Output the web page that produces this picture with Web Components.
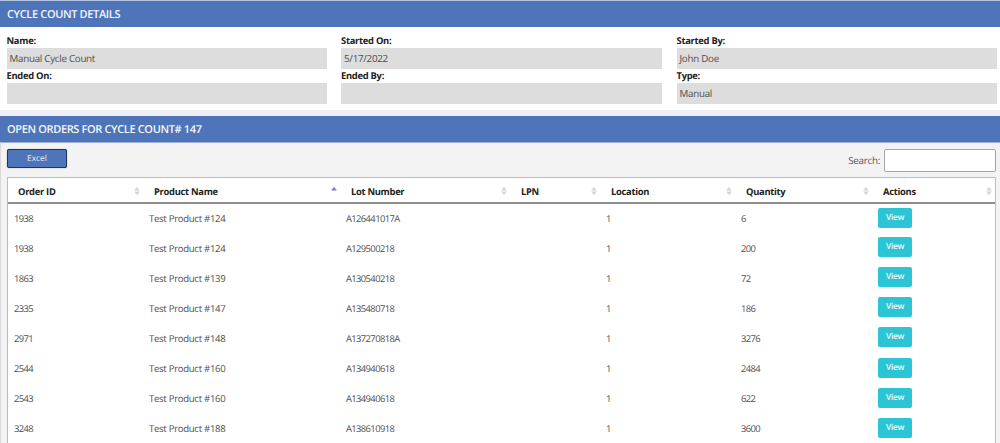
<!DOCTYPE html>
<html><head><meta charset="utf-8">
<style>
html,body{margin:0;padding:0;background:#eef0f5;height:443px;overflow:hidden;font-family:"Open Sans","Noto Sans",sans-serif;color:#333;text-rendering:geometricPrecision}
</style></head><body>
<count-page></count-page>
<template id="bar-t"><style>
:host{display:block;background:#4e74b9;color:#f4f7fc;height:26px;box-sizing:border-box;padding:0 7px;font:600 11px/27px "Open Sans",sans-serif;letter-spacing:-.36px}
</style><slot></slot></template>

<template id="field-t"><style>
:host{display:block;min-width:0}
.l{font:700 9.4px/14px "Open Sans",sans-serif;letter-spacing:-.28px;color:#222;height:14px}
.v{background:#dddddd;height:21px;font:400 9.8px/21px "Open Sans",sans-serif;letter-spacing:-.28px;color:#4f4f4f;padding:0 3px;box-sizing:border-box}
</style><div class="l"></div><div class="v"></div></template>

<template id="details-t"><style>
:host{display:grid;grid-template-columns:320px 321px 320px;column-gap:14.5px;row-gap:0;background:#fff;padding:7px 4px 6px 6.5px;height:83px;box-sizing:border-box;align-content:start}
</style><slot></slot></template>

<template id="btn-t"><style>
:host{display:inline-block;box-sizing:border-box;width:60px;height:19px;background:#4e74b9;border:1px solid #1f3559;border-radius:2px;color:#e8eefb;font:400 8.4px/18px "Open Sans",sans-serif;text-align:center;box-shadow:0 0 1px #555}
</style><slot></slot></template>

<template id="view-t"><style>
:host{display:block;box-sizing:border-box;width:34px;height:20px;background:#2cc5d6;border-radius:2px;color:#f2fbfc;font:600 8.4px/20px "Open Sans",sans-serif;text-align:center}
</style><slot></slot></template>

<template id="sort-t"><style>
:host{display:inline-block;width:6px;height:10px;line-height:0}
svg{display:block}
</style><svg width="6" height="10" viewBox="0 0 6 10"><path class="u" d="M3 .8 L5.8 4.4 L.2 4.4Z"/><path class="d" d="M.2 5.6 L5.8 5.6 L3 9.2Z"/></svg></template>

<template id="table-t"><style>
:host{display:block;background:#fff;border:1px solid #bdbdbd;border-bottom:0;box-sizing:border-box}
table{border-collapse:collapse;table-layout:fixed;width:100%;font-family:"Open Sans",sans-serif}
th{height:25px;padding:2px 0 0 11px;text-align:left;font:700 9.4px/21px "Open Sans",sans-serif;letter-spacing:-.3px;color:#222;border-bottom:2px solid #8f8f8f;box-sizing:border-box}
th:first-child{padding-left:10px}
th .in{display:flex;justify-content:space-between;align-items:center;padding-right:3px}
td{height:30.1px;padding:1px 0 0 6px;font:400 9.6px/14px "Open Sans",sans-serif;letter-spacing:-.3px;color:#505050;box-sizing:border-box}
td.n{font-size:9.4px;letter-spacing:-.6px}
td.a{padding:0 0 2px 6px}
</style><table><colgroup><col style="width:135px"><col style="width:197px"><col style="width:170px"><col style="width:90px"><col style="width:135px"><col style="width:137px"><col></colgroup><thead><tr></tr></thead><tbody></tbody></table></template>

<template id="panel-t"><style>
:host{display:block;background:#f3f3f3;border-left:1px solid #d8d8d8;border-top:1px solid #9fb2d6;padding:6px 4px 0 6px;height:301px;box-sizing:border-box}
.top{display:flex;justify-content:space-between;align-items:flex-start;height:28px}
.s{display:flex;align-items:center;gap:4px;font:400 9.8px/23px "Open Sans",sans-serif;letter-spacing:-.25px;color:#555}
.box{width:112px;height:23px;box-sizing:border-box;background:#fff;border:1px solid #a5a5a5;border-radius:2px}
</style><div class="top"><excel-btn>Excel</excel-btn><div class="s"><span>Search:</span><div class="box"></div></div></div><slot></slot></template>

<template id="page-t"><style>
:host{display:block;width:1000px;border-top:1px solid #b4c3df}
.gap{height:6px}
</style>
<section-bar>CYCLE COUNT DETAILS</section-bar>
<detail-grid>
<detail-field label="Name:" value="Manual Cycle Count"></detail-field>
<detail-field label="Started On:" value="5/17/2022"></detail-field>
<detail-field label="Started By:" value="John Doe"></detail-field>
<detail-field label="Ended On:" value=""></detail-field>
<detail-field label="Ended By:" value=""></detail-field>
<detail-field label="Type:" value="Manual"></detail-field>
</detail-grid>
<div class="gap"></div>
<section-bar>OPEN ORDERS FOR CYCLE COUNT# 147</section-bar>
<orders-panel><orders-table></orders-table></orders-panel>
</template>

<script>
function shell(el,id){const r=el.attachShadow({mode:'open'});r.appendChild(document.getElementById(id).content.cloneNode(true));return r}
const simple=(name,id)=>customElements.define(name,class extends HTMLElement{constructor(){super();shell(this,id)}});
simple('section-bar','bar-t');simple('detail-grid','details-t');simple('excel-btn','btn-t');simple('view-btn','view-t');simple('orders-panel','panel-t');
customElements.define('detail-field',class extends HTMLElement{connectedCallback(){if(this.shadowRoot)return;const r=shell(this,'field-t');r.querySelector('.l').textContent=this.getAttribute('label');r.querySelector('.v').textContent=this.getAttribute('value')}});
customElements.define('sort-icon',class extends HTMLElement{connectedCallback(){if(this.shadowRoot)return;const r=shell(this,'sort-t');const a=this.hasAttribute('asc');r.querySelector('.u').setAttribute('fill',a?'#7a7ad0':'#d6d6d6');r.querySelector('.d').setAttribute('fill',a?'#ffffff':'#d6d6d6')}});
customElements.define('orders-table',class extends HTMLElement{connectedCallback(){if(this.shadowRoot)return;const r=shell(this,'table-t');
const heads=['Order ID','Product Name','Lot Number','LPN','Location','Quantity','Actions'];
const rows=[['1938','Test Product #124','A126441017A','1','6'],['1938','Test Product #124','A129500218','1','200'],['1863','Test Product #139','A130540218','1','72'],['2335','Test Product #147','A135480718','1','186'],['2971','Test Product #148','A137270818A','1','3276'],['2544','Test Product #160','A134940618','1','2484'],['2543','Test Product #160','A134940618','1','622'],['3248','Test Product #188','A138610918','1','3600']];
const tr=r.querySelector('thead tr');
heads.forEach((h,i)=>{const th=document.createElement('th');th.innerHTML='<div class="in"><span>'+h+'</span><sort-icon'+(i==1?' asc':'')+'></sort-icon></div>';tr.appendChild(th)});
const tb=r.querySelector('tbody');
rows.forEach(d=>{const t=document.createElement('tr');const c=[d[0],d[1],d[2],'',d[3],d[4]];c.forEach((x,i)=>{const td=document.createElement('td');td.textContent=x;if(i!=1)td.className='n';t.appendChild(td)});const a=document.createElement('td');a.className='a';a.innerHTML='<view-btn>View</view-btn>';t.appendChild(a);tb.appendChild(t)});
}});
customElements.define('count-page',class extends HTMLElement{constructor(){super();shell(this,'page-t')}});
</script>
</body></html>
